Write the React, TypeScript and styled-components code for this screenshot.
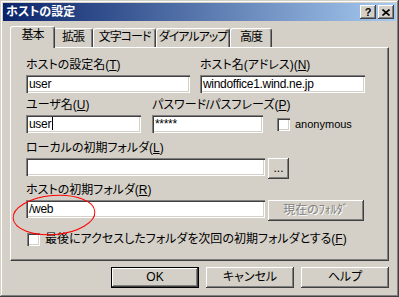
import styled, { createGlobalStyle, css } from 'styled-components';

const GlobalStyle = createGlobalStyle`
  html, body {
    margin: 0;
    padding: 0;
    background: #d4d0c8;
  }
`;

const Window = styled.div`
  position: relative;
  width: 399px;
  height: 297px;
  box-sizing: border-box;
  padding: 3px;
  background: #d4d0c8;
  box-shadow: inset -1px -1px #404040, inset 1px 1px #d4d0c8, inset -2px -2px #808080, inset 2px 2px #fff;
  font-family: "Liberation Sans", "Noto Sans CJK JP", sans-serif;
  font-size: 12px;
  line-height: 13px;
  font-feature-settings: "palt";
  color: #000;
`;

const TitleBar = styled.div`
  height: 18px;
  display: flex;
  align-items: center;
  padding: 0 2px 0 3px;
  background: linear-gradient(to right, #0a246a, #a6caf0);
  color: #fff;
  font-weight: bold;
`;

const TitleButtons = styled.div`
  display: flex;
  gap: 2px;
  margin-left: auto;
`;

const TitleButton = styled.div`
  width: 16px;
  height: 14px;
  box-sizing: border-box;
  display: flex;
  align-items: center;
  justify-content: center;
  background: #d4d0c8;
  color: #000;
  font-size: 11px;
  font-weight: bold;
  box-shadow: inset -1px -1px #404040, inset 1px 1px #fff, inset -2px -2px #808080;
`;

const Body = styled.div`
  padding: 5px 7px 0 7px;
`;

const TabStrip = styled.div`
  display: flex;
  align-items: flex-end;
  height: 21px;
  padding-left: 2px;
`;

const Tab = styled.div<{ $w: number; $active?: boolean }>`
  position: relative;
  box-sizing: border-box;
  width: ${(p) => p.$w}px;
  height: 19px;
  padding-top: 2px;
  text-align: center;
  letter-spacing: -1px;
  background: #d4d0c8;
  border: 1px solid #fff;
  border-bottom: none;
  border-right-color: #404040;
  border-radius: 3px 3px 0 0;
  box-shadow: inset -1px 0 #808080;
  white-space: nowrap;
  ${(p) =>
    p.$active &&
    css`
      width: ${p.$w + 4}px;
      height: 22px;
      margin: 0 -2px -1px;
      z-index: 1;
    `}
`;

const Panel = styled.div`
  height: 214px;
  box-sizing: border-box;
  padding: 11px 0 0 15px;
  border: 1px solid #fff;
  border-right-color: #404040;
  border-bottom-color: #404040;
  box-shadow: inset -1px -1px #808080;
`;

const Row = styled.div<{ $gap: number; $mt?: number }>`
  display: flex;
  align-items: flex-end;
  gap: ${(p) => p.$gap}px;
  margin-top: ${(p) => p.$mt ?? 0}px;
`;

const Field = styled.div<{ $w?: number; $mt?: number }>`
  display: flex;
  flex-direction: column;
  gap: 3px;
  width: ${(p) => (p.$w ? `${p.$w}px` : 'auto')};
  margin-top: ${(p) => p.$mt ?? 0}px;
`;

const Label = styled.div`
  height: 13px;
  white-space: nowrap;
`;

const InputRow = styled.div`
  display: flex;
  align-items: flex-start;
  gap: 3px;
`;

const TextBox = styled.div<{ $w?: number }>`
  width: ${(p) => (p.$w ? `${p.$w}px` : '100%')};
  height: 18px;
  box-sizing: border-box;
  padding: 2px 2px 2px 3px;
  line-height: 14px;
  letter-spacing: -0.3px;
  background: #fff;
  white-space: nowrap;
  overflow: hidden;
  box-shadow: inset 1px 1px #808080, inset 2px 2px #404040, inset -1px -1px #fff, inset -2px -2px #d4d0c8;
`;

const Caret = styled.span`
  display: inline-block;
  width: 1px;
  height: 13px;
  margin-left: 1px;
  vertical-align: -2px;
  background: #000;
`;

const Button = styled.button<{ $w: number; $h?: number; $default?: boolean }>`
  width: ${(p) => p.$w}px;
  height: ${(p) => p.$h ?? 21}px;
  box-sizing: border-box;
  padding: 0;
  border: none;
  background: #d4d0c8;
  color: #000;
  font: inherit;
  font-feature-settings: "palt";
  line-height: 13px;
  box-shadow: inset -1px -1px #404040, inset 1px 1px #fff, inset -2px -2px #808080;
  ${(p) =>
    p.$default &&
    css`
      box-shadow: inset 0 0 0 1px #000, inset -2px -2px #404040, inset 2px 2px #fff, inset -3px -3px #808080;
    `}
  &:disabled {
    color: #808080;
    text-shadow: 1px 1px #fff;
  }
`;

const CheckRow = styled.label<{ $mt?: number; $ml?: number; $mb?: number; $small?: boolean }>`
  display: flex;
  align-items: center;
  gap: 5px;
  margin: ${(p) => `${p.$mt ?? 0}px 0 ${p.$mb ?? 0}px ${p.$ml ?? 0}px`};
  font-size: ${(p) => (p.$small ? 11 : 12)}px;
  white-space: nowrap;
`;

const CheckBox = styled.span`
  width: 13px;
  height: 13px;
  flex: none;
  box-sizing: border-box;
  background: #fff;
  box-shadow: inset 1px 1px #808080, inset 2px 2px #404040, inset -1px -1px #fff, inset -2px -2px #d4d0c8;
`;

const Footer = styled.div`
  display: flex;
  justify-content: flex-end;
  gap: 7px;
  margin-top: 6px;
`;

const Annotation = styled.svg`
  position: absolute;
  left: 11px;
  top: 193px;
  pointer-events: none;
`;

const tabs = [
  { label: '基本', w: 41 },
  { label: '拡張', w: 40 },
  { label: '文字コード', w: 63 },
  { label: 'ダイアルアップ', w: 74 },
  { label: '高度', w: 42 },
];

const App = () => {
  return (
    <>
      <GlobalStyle />
      <Window>
        <TitleBar>
          ホストの設定
          <TitleButtons>
            <TitleButton>?</TitleButton>
            <TitleButton>
              <svg width="8" height="7" viewBox="0 0 8 7">
                <path d="M0.5 0.5 L7.5 6.5 M7.5 0.5 L0.5 6.5" stroke="#000" strokeWidth="1.6" />
              </svg>
            </TitleButton>
          </TitleButtons>
        </TitleBar>

        <Body>
          <TabStrip>
            {tabs.map((t, i) => (
              <Tab key={t.label} $w={t.w} $active={i === 0}>
                {t.label}
              </Tab>
            ))}
          </TabStrip>

          <Panel>
            <Row $gap={10}>
              <Field $w={164}>
                <Label>
                  ホストの設定名(<u>T</u>)
                </Label>
                <TextBox>user</TextBox>
              </Field>
              <Field $w={165}>
                <Label>
                  ホスト名(アドレス)(<u>N</u>)
                </Label>
                <TextBox>windoffice1.wind.ne.jp</TextBox>
              </Field>
            </Row>

            <Row $gap={11} $mt={6}>
              <Field $w={115}>
                <Label>
                  ユーザ名(<u>U</u>)
                </Label>
                <TextBox>
                  user
                  <Caret />
                </TextBox>
              </Field>
              <Field $w={111}>
                <Label>
                  パスワード/パスフレーズ(<u>P</u>)
                </Label>
                <TextBox>*****</TextBox>
              </Field>
              <CheckRow $ml={3} $mb={2} $small>
                <CheckBox />
                anonymous
              </CheckRow>
            </Row>

            <Field $mt={9}>
              <Label>
                ローカルの初期フォルダ(<u>L</u>)
              </Label>
              <InputRow>
                <TextBox $w={239} />
                <Button $w={21}>...</Button>
              </InputRow>
            </Field>

            <Field $mt={5}>
              <Label>
                ホストの初期フォルダ(<u>R</u>)
              </Label>
              <InputRow>
                <TextBox $w={239}>/web</TextBox>
                <Button $w={96} disabled>
                  現在のﾌｫﾙﾀﾞ
                </Button>
              </InputRow>
            </Field>

            <CheckRow $mt={12} $ml={1}>
              <CheckBox />
              <span>
                最後にアクセスしたフォルダを次回の初期フォルダとする(<u>F</u>)
              </span>
            </CheckRow>
          </Panel>

          <Footer>
            <Button $w={88} $default>
              OK
            </Button>
            <Button $w={88}>キャンセル</Button>
            <Button $w={88}>ヘルプ</Button>
          </Footer>
        </Body>

        <Annotation width="88" height="44" viewBox="0 0 88 44">
          <ellipse cx="43" cy="22" rx="41" ry="19.5" transform="rotate(-5 43 22)" fill="none" stroke="#ff0000" strokeWidth="1" />
        </Annotation>
      </Window>
    </>
  );
};

export default App;
